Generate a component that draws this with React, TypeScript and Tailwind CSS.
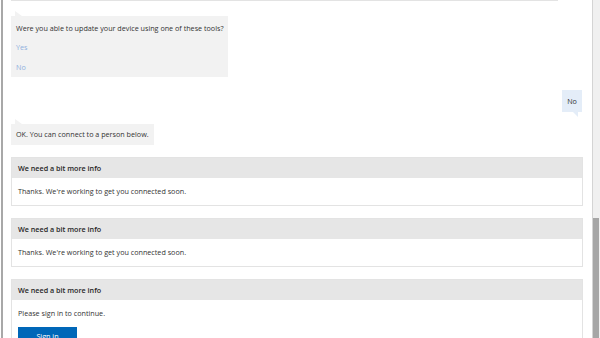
const font = { fontFamily: '"Open Sans", "Noto Sans", sans-serif' };

const BotBubble = ({ children }: { children: React.ReactNode }) => (
  <div className="relative w-fit">
    <div className="absolute left-[4px] top-[-5px] h-0 w-0 border-b-[5px] border-r-[7px] border-b-[#f2f2f2] border-r-transparent" />
    <div className="bg-[#f2f2f2] px-[5px]">{children}</div>
  </div>
);

const InfoCard = ({
  body,
  children,
}: {
  body: string;
  children?: React.ReactNode;
}) => (
  <div className="border border-[#e3e3e3] bg-white">
    <div className="flex h-[20px] items-center bg-[#e6e6e6] px-[6px] text-[7.2px] font-semibold text-[#262626]">
      We need a bit more info
    </div>
    <div className="px-[6px] pb-[8px] pt-[8px]">
      <p className="text-[7.2px] leading-[11px] text-[#333]">{body}</p>
      {children}
    </div>
  </div>
);

export default function App() {
  return (
    <div
      className="flex h-[338px] w-[600px] overflow-hidden bg-white"
      style={font}
    >
      <div className="w-[1px] bg-white" />
      <div className="w-[2px] bg-[#a8a8a8]" />
      <div className="flex flex-1 flex-col pl-[8px] pr-[9px]">
        <div className="mr-[25px] h-[4px] border-x border-b border-[#e3e3e3]" />

        <div className="mt-[15px]">
          <BotBubble>
            <div className="w-[207px] whitespace-nowrap pb-[4px] pt-[6px]">
              <p className="h-[12px] text-[7.2px] leading-[12px] text-[#333]">
                Were you able to update your device using one of these tools?
              </p>
              <p className="mt-[7px] h-[12px] text-[7.2px] leading-[12px] text-[#8fb1de]">
                Yes
              </p>
              <p className="mt-[8px] h-[12px] text-[7.2px] leading-[12px] text-[#8fb1de]">
                No
              </p>
            </div>
          </BotBubble>
        </div>

        <div className="relative mt-[13px] self-end pr-[1px]">
          <div className="flex h-[22px] w-[20px] items-center justify-center bg-[#e4edf8] text-[7.2px] text-[#333]">
            No
          </div>
          <div className="absolute right-[5px] top-[22px] h-0 w-0 border-l-[5px] border-t-[5px] border-l-transparent border-t-[#e4edf8]" />
        </div>

        <div className="mt-[12px]">
          <BotBubble>
            <div className="flex h-[21px] items-center whitespace-nowrap text-[7.2px] text-[#333]">
              OK. You can connect to a person below.
            </div>
          </BotBubble>
        </div>

        <div className="mt-[12px] flex flex-col gap-[12px]">
          <InfoCard body="Thanks. We're working to get you connected soon." />
          <InfoCard body="Thanks. We're working to get you connected soon." />
          <InfoCard body="Please sign in to continue.">
            <button className="mt-[8px] flex h-[18px] w-[59px] items-center justify-center bg-[#0067b8] text-[7.2px] text-white">
              Sign in
            </button>
          </InfoCard>
        </div>
      </div>
      <div className="flex w-[8px]">
        <div className="w-[1px] bg-[#d4d4d4]" />
        <div className="flex w-[6px] flex-col bg-[#f0f0f0]">
          <div className="h-[218px]" />
          <div className="flex-1 bg-[#a6a6a6]" />
        </div>
        <div className="w-[1px] bg-[#f0f0f0]" />
      </div>
    </div>
  );
}
